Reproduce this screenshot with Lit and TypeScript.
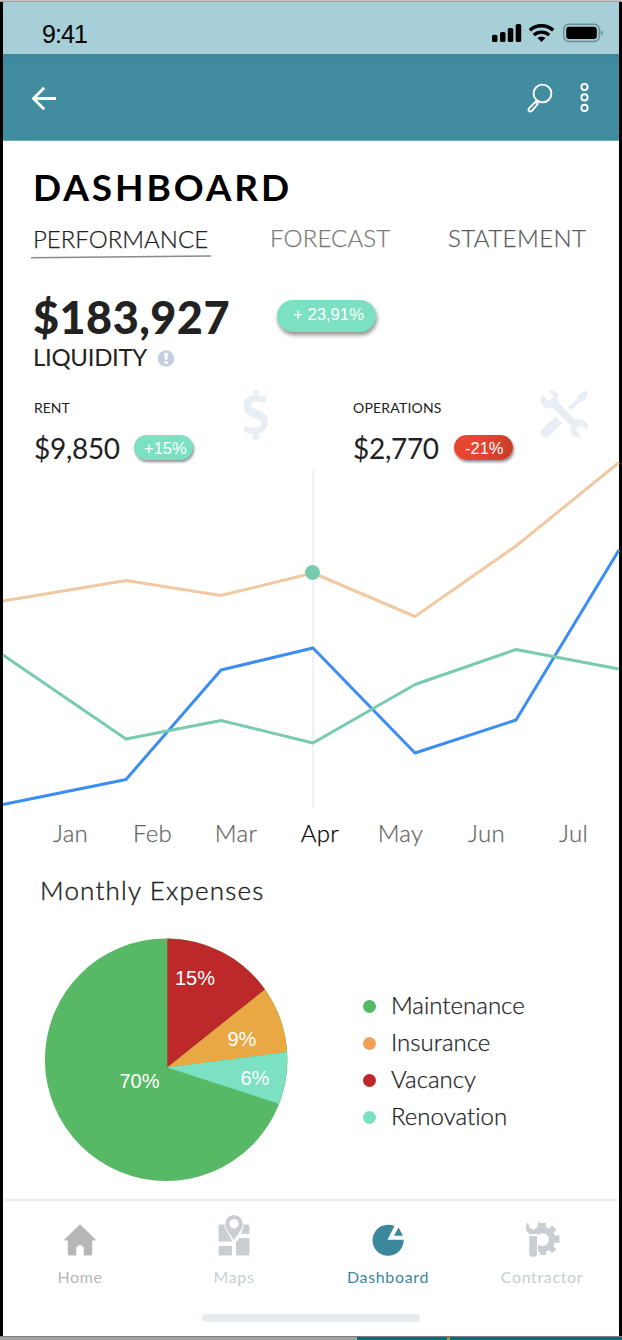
import { LitElement, html, css, svg } from "lit";
import { customElement } from "lit/decorators.js";
import { classMap } from "lit/directives/class-map.js";

const months = ["Jan", "Feb", "Mar", "Apr", "May", "Jun", "Jul"];

const series = [
  { cls: "orange", points: "0,139 123,118.5 218,133.5 310,111 412,154.5 513,84 616,0.5" },
  { cls: "blue", points: "0,342.5 123,317.5 218,208 310,186 412,291 513,258 616,88" },
  { cls: "green", points: "0,193 123,277 218,258.5 310,281 412,222.5 513,187.5 616,207" },
];

const legend = [
  { name: "Maintenance", cls: "maintenance" },
  { name: "Insurance", cls: "insurance" },
  { name: "Vacancy", cls: "vacancy" },
  { name: "Renovation", cls: "renovation" },
];

const homeIcon = svg`<path d="M24 11.200 8.600 26.300q-.9 1.200.6 1.200h2.600v13.600q0 1.400 1.400 1.400h7.100v-6.800q0-3.400 3.700-3.400t3.700 3.400v6.800h7.100q1.400 0 1.400-1.400V27.500h2.600q1.500 0 .6-1.200z"/>`;

const mapsIcon = svg`
  <path d="M10 11.500h4.500c.2 5.500 4.500 9.500 7 14.700V28.500h-13V13q0-1.500 1.500-1.500z"/>
  <path d="M33.500 11.500h4.500q1.500 0 1.500 1.500v7.800h-8.700c1.600-3 2.700-6 2.700-9.300z"/>
  <path d="M10 33h12v9.500H10q-1.500 0-1.500-1.500v-6.500q0-1.500 1.500-1.500z"/>
  <path d="M29.500 25h8.500q1.500 0 1.500 1.500V41q0 1.500-1.500 1.500H26V28.500c1.500-.5 2.500-2 3.500-3.500z"/>
  <path fill-rule="evenodd" d="M24 2a8.800 8.800 0 0 1 8.800 8.800C32.800 17 27 21.500 24 27.500 21 21.500 15.200 17 15.200 10.800A8.800 8.800 0 0 1 24 2zm0 4.100a4.700 4.700 0 1 0 0 9.400 4.700 4.700 0 0 0 0-9.400z"/>`;

const dashboardIcon = svg`
  <path d="M23.500 26.800h16.200A15.600 15.600 0 1 1 30.500 13z"/>
  <path d="M34.600 14.600 39 22.700h-9z"/>`;

const contractorIcon = svg`
  <path d="M20.200 22.300V20L22 12V10h6v4.200l3.200 1.400 3-3 4.200 4.200-3 3 1.500 2.800h4.500v7.200h-4.500l-1.500 3.200 3 3-4.200 4.200-3-3-3.200 1.400V42h-6v-3.200h-1.800V30.900A6.300 6.300 0 1 0 20.200 22.300z"/>
  <path d="M10.200 9c-3.400 3.500-3.200 9 1.300 12h8.200c4-2.500 4.400-8.500 1-13l-1.700 6.500-3.800 2.200-3.900-2.200z"/>
  <path d="M11.200 23h7.800v16.900a3.900 3.900 0 0 1-7.800 0z"/>`;

const navItems = [
  { label: "Home", cls: "home", icon: homeIcon },
  { label: "Maps", cls: "maps", icon: mapsIcon },
  { label: "Dashboard", cls: "current", icon: dashboardIcon },
  { label: "Contractor", cls: "contractor", icon: contractorIcon },
];

@customElement("app-root")
export class AppRoot extends LitElement {
  static styles = css`
    :host {
      display: block;
      width: 622px;
      height: 1340px;
      overflow: hidden;
      background: #fff;
      font-family: Lato, "Open Sans", sans-serif;
      font-variant-ligatures: none;
      color: #222;
    }
    * { box-sizing: border-box; }
    svg { display: block; flex: none; overflow: visible; }
    .edge-top { height: 2px; background: linear-gradient(#c4c2c3 50%, #a3a0a1 50%); }
    .phone {
      height: 1334px;
      border: solid #000;
      border-width: 0 3px;
      display: flex;
      flex-direction: column;
    }
    .edge-bottom { height: 4px; display: flex; border-top: 1px solid #7d7d7d; background: #a3a3a3; }
    .edge-bottom .desk { width: 357px; }
    .edge-bottom .window { flex: 1; background: linear-gradient(90deg, #0f6876 90px, #a98a35 90px, #a98a35 93px, #0f6876 93px); }

    .status {
      height: 52px;
      background: #a6cfd7;
      display: flex;
      justify-content: space-between;
      padding: 0 16px 0 39px;
    }
    .time { font: 25px/30px "Liberation Sans", sans-serif; letter-spacing: -0.900px; color: #000; padding-top: 17px; }
    .status svg { margin-top: 20px; }
    .appbar {
      height: 87px;
      border-bottom: 1px solid #6aa9b7;
      background: linear-gradient(#3e899d 10px, #428ca0 10px);
      display: flex;
      justify-content: space-between;
      padding: 0 30px 0 27px;
    }
    .appbar .back { margin-top: 31px; }
    .appbar .actions { margin-top: 28px; }

    h1 {
      margin: 22px 0 0 30px;
      font-size: 37px;
      line-height: 48px;
      font-weight: 700;
      letter-spacing: 2.900px;
      color: #000;
    }
    .tabs { display: flex; margin-top: 11px; height: 38px; padding-left: 28px; font-size: 24px; line-height: 30px; font-weight: 300; letter-spacing: 0.150px; }
    .tab { color: #5a5a5a; padding-top: 1px; -webkit-text-stroke: 0.250px currentColor; }
    .tab.active { width: 180px; padding: 2px 0 0 2px; color: #222; letter-spacing: 0; }
    .tab.active svg { margin: 1px 0 0 -2px; }
    .tab.forecast { width: 178px; margin-left: 59px; color: #7a7a7a; }
    .tab.statement { letter-spacing: 0.400px; }

    .amount-row { display: flex; align-items: flex-start; margin-top: 31px; height: 50px; padding-left: 30px; }
    .amount { width: 244px; font-size: 45px; line-height: 52px; font-weight: 900; letter-spacing: 0.450px; }
    .badge {
      display: block;
      font-family: "Liberation Sans", sans-serif;
      color: #fff;
      background: #7ce0c3;
      box-shadow: 1px 3px 4px rgba(0, 0, 0, 0.45);
      white-space: pre;
    }
    .badge.large { width: 99px; height: 32px; margin-top: 9px; border-radius: 16px; font-size: 16.700px; line-height: 29px; padding-left: 16px; }
    .badge.small { width: 59px; height: 25px; margin-top: 3px; border-radius: 12.500px; font-size: 16.500px; line-height: 26px; padding-left: 10px; box-shadow: 1px 2px 3px rgba(0, 0, 0, 0.45); }
    .badge.down { background: linear-gradient(100deg, #e8472f 35%, #c63f2b); padding-left: 11px; }
    .liquidity { display: flex; height: 30px; padding-left: 30px; font-size: 24px; line-height: 32px; }
    .liquidity-name { width: 124px; letter-spacing: -0.300px; }
    .liquidity svg { margin-top: 8px; }

    .stats { display: flex; height: 91px; padding: 19px 0 0 31px; }
    .stat { display: flex; flex: none; width: 319px; }
    .stat-text { flex: none; width: 207px; padding-top: 9px; }
    .stat.operations .stat-text { width: 187px; }
    .stat-name { font-size: 14px; line-height: 18px; }
    .operations .stat-name { letter-spacing: 0.200px; }
    .stat-value { display: flex; margin-top: 15px; font-size: 28px; line-height: 32px; height: 30px; letter-spacing: -0.300px; }
    .stat-value .badge { letter-spacing: 0; }
    .stat-number { width: 100px; }
    .operations .stat-number { width: 101px; }
    .stat-icon { fill: #e9eef5; }

    .chart polyline { fill: none; stroke-width: 3; stroke-linejoin: round; }
    .chart .orange { stroke: #f1c9a2; }
    .chart .blue { stroke: #3c8df3; }
    .chart .green { stroke: #79cbb0; }
    .chart .cursor { stroke: #ececec; stroke-width: 1.500; }
    .chart .marker { fill: #79cbb0; }

    .months {
      display: grid;
      grid-template-columns: 82px 82px 85px 83px 78px 94px 80px;
      margin: 7px 0 0 26.500px;
      font-size: 24px;
      line-height: 31px;
      height: 30px;
      font-weight: 300;
      letter-spacing: 0.300px;
      text-align: center;
      color: #666;
      -webkit-text-stroke: 0.250px currentColor;
    }
    .month.selected { color: #000; }

    h2 { margin: 26px 0 0 37px; font-size: 26px; line-height: 34px; font-weight: 300; letter-spacing: 1.200px; -webkit-text-stroke: 0.400px currentColor; }
    .expenses { display: flex; margin-top: 31px; height: 261px; padding-left: 42px; }
    .pie text { fill: #fff; font-family: "Liberation Sans", sans-serif; font-size: 20px; }
    .pie .maintenance { fill: #57b966; }
    .pie .vacancy { fill: #bd292a; }
    .pie .insurance { fill: #eaa845; }
    .pie .renovation { fill: #7ce0c3; }
    .legend { margin: 48px 0 0 75px; padding: 0; list-style: none; }
    .legend li { display: flex; align-items: center; height: 37px; font-size: 24px; line-height: 37px; font-weight: 300; -webkit-text-stroke: 0.250px currentColor; }
    .swatch { width: 13px; height: 13px; margin: 4px 15px 0 0; border-radius: 50%; }
    .swatch.maintenance { background: #57b966; }
    .swatch.insurance { background: #f29f58; }
    .swatch.vacancy { background: #bd292a; }
    .swatch.renovation { background: #7ce0c3; }

    .divider { height: 2px; margin: 0 2px; background: #e9ebec; }
    nav { display: grid; grid-template-columns: repeat(4, 1fr); height: 113px; }
    .nav-item { display: flex; flex-direction: column; align-items: center; padding-top: 12px; font-size: 16px; line-height: 20px; letter-spacing: 0.650px; font-weight: 400; }
    .nav-item svg { fill: currentColor; margin-bottom: 6px; }
    .home { color: #b7b7b7; }
    .maps, .contractor { color: #c9ced3; }
    .current { color: #3b879b; }
    .indicator { width: 218px; height: 8px; margin-left: 199px; border-radius: 4px; background: #e8ebee; }
  `;

  private renderStatus() {
    return html`<div class="status">
      <span class="time">9:41</span>
      <svg width="112" height="24" viewBox="0 0 112 24">
        <g>
          <rect x="1" y="12.800" width="5.500" height="7.200" rx="1.600"></rect>
          <rect x="9" y="10" width="5.500" height="10" rx="1.600"></rect>
          <rect x="16.800" y="6" width="5.500" height="14" rx="1.600"></rect>
          <rect x="24.700" y="2" width="5.500" height="18" rx="1.600"></rect>
        </g>
        <g transform="translate(-0.500 0)">
          <g fill="none" stroke="#000" stroke-width="3.400">
            <path d="M39.300 8.300a17.300 17.300 0 0 1 23.400 0"></path>
            <path d="M43.300 13.100a11.400 11.400 0 0 1 15.400 0"></path>
          </g>
          <path d="M51 19.900l-4-3.900a5.800 5.800 0 0 1 8 0z"></path>
        </g>
        <rect x="72.800" y="2.300" width="35.400" height="17.200" rx="5" fill="none" stroke="#6e8d94" stroke-width="1.500"></rect>
        <rect x="75.200" y="4.800" width="30.600" height="12.300" rx="3"></rect>
        <path d="M109.800 8.200q2 .6 2 2.800t-2 2.800z" fill="#6e8d94"></path>
      </svg>
    </div>`;
  }

  private renderAppBar() {
    return html`<div class="appbar">
      <svg class="back" width="28" height="26" viewBox="0 0 28 26" fill="none" stroke="#fff" stroke-width="2.800">
        <path d="M26 13.500H3.500M14.200 2.800 3.500 13.500l10.700 10.700"></path>
      </svg>
      <svg class="actions" width="64" height="32" viewBox="0 0 64 32" fill="none" stroke="#fff" stroke-width="1.900">
        <circle cx="17.500" cy="11.500" r="8.900"></circle>
        <path d="M10.200 20.500q2.200-.5 2.500 1.500L7 28.900q-1.500 1.300-2.800.2t-.2-2.700l5.900-6.100M12 18l-2.100 2.500"></path>
        <circle cx="59.500" cy="5" r="3.100"></circle>
        <circle cx="59.500" cy="15.400" r="3.100"></circle>
        <circle cx="59.500" cy="25.900" r="3.100"></circle>
      </svg>
    </div>`;
  }

  private renderStats() {
    return html`<div class="stats">
      <div class="stat">
        <div class="stat-text">
          <div class="stat-name">RENT</div>
          <div class="stat-value"><span class="stat-number">$9,850</span><span class="badge small">+15%</span></div>
        </div>
        <svg class="stat-icon" width="30" height="50" viewBox="0 0 30 50">
          <path d="M12 0h6v5.500c3 .3 5.500 1 7.800 2.100l-1.500 5.800c-3.300-1.400-6-2-8.500-2-3.800 0-5.800 1.200-5.800 3.400 0 2.600 2.700 3.700 7 5.400 6.500 2.400 10 6 10 11.600 0 6-3.700 10-9 11.300V49.500h-6v-5.600c-3.700-.2-7-1.100-9.500-2.500l1.500-6c3 1.500 6.500 2.400 9.700 2.400 3.800 0 6-1.400 6-4.200 0-2.700-2-4-6.700-5.700C6 25.300 2.300 22 2.300 16c0-5.400 3.600-9.400 9.700-10.400z"></path>
        </svg>
      </div>
      <div class="stat operations">
        <div class="stat-text">
          <div class="stat-name">OPERATIONS</div>
          <div class="stat-value"><span class="stat-number">$2,770</span><span class="badge small down">-21%</span></div>
        </div>
        <svg class="stat-icon" width="48" height="48" viewBox="0 0 48 48">
          <path d="M2.500 5.500 9 10.500l5-4L8.500.8C15-1.500 20 4.500 17.500 11.500l18 18C43 27 49.500 33 47 40l-6-5-5.500 4.500L41 46.500c-7 2.500-12.500-3.500-10-10.500l-18-18C5.500 20.500-1 14 .8 5.800z"></path>
          <path d="M28 17.500 37 9l.8-4 7-4.500L48 3.300 45 10.500l-4.500 1.300L31 20.500z"></path>
          <path d="M15.500 26.500l6.500 6.500L8.500 46.300a4.700 4.700 0 0 1-6.700-6.700z"></path>
        </svg>
      </div>
    </div>`;
  }

  private renderChart() {
    return html`<svg class="chart" width="616" height="348" viewBox="0 0 616 348">
      <line class="cursor" x1="310.200" x2="310.200" y1="8" y2="346"></line>
      ${series.map((s) => svg`<polyline class=${s.cls} points=${s.points}></polyline>`)}
      <circle class="marker" cx="309.500" cy="110.500" r="7.500"></circle>
    </svg>`;
  }

  private renderPie() {
    return html`<svg class="pie" width="243" height="244" viewBox="0 0 243 244">
      <circle class="maintenance" cx="121.200" cy="121.700" r="121.300"></circle>
      <path class="vacancy" d="M122.300 129.400V.4A121.300 121.300 0 0 1 220 51.500z"></path>
      <path class="insurance" d="M122.300 129.400 220 51.500A121.300 121.300 0 0 1 241.900 114z"></path>
      <path class="renovation" d="M122.300 129.400 241.900 114A121.300 121.300 0 0 1 233.800 165.700z"></path>
      <text x="130" y="47">15%</text>
      <text x="182.500" y="108">9%</text>
      <text x="195.500" y="147">6%</text>
      <text x="74.500" y="150">70%</text>
    </svg>`;
  }

  render() {
    return html`
      <div class="edge-top"></div>
      <div class="phone">
        ${this.renderStatus()} ${this.renderAppBar()}
        <h1>DASHBOARD</h1>
        <div class="tabs">
          <div class="tab active">
            <span>PERFORMANCE</span>
            <svg width="180" height="4" viewBox="0 0 180 4"><path d="M0 2.800 180 1" stroke="#8a8a8a" stroke-width="1.500"></path></svg>
          </div>
          <div class="tab forecast">FORECAST</div>
          <div class="tab statement">STATEMENT</div>
        </div>
        <div class="amount-row">
          <span class="amount">$183,927</span><span class="badge large">+ 23,91%</span>
        </div>
        <div class="liquidity">
          <span class="liquidity-name">LIQUIDITY</span>
          <svg width="18" height="18" viewBox="0 0 18 18">
            <circle cx="9" cy="9.500" r="8.300" fill="#c5cfdf"></circle>
            <path d="M7.300 4h3.600l-.4 6.700H7.700zM7.500 12h3.200v2.700H7.500z" fill="#fff"></path>
          </svg>
        </div>
        ${this.renderStats()} ${this.renderChart()}
        <div class="months">
          ${months.map((m) => html`<span class=${classMap({ month: true, selected: m === "Apr" })}>${m}</span>`)}
        </div>
        <h2>Monthly Expenses</h2>
        <div class="expenses">
          ${this.renderPie()}
          <ul class="legend">
            ${legend.map((l) => html`<li><span class="swatch ${l.cls}"></span>${l.name}</li>`)}
          </ul>
        </div>
        <div class="divider"></div>
        <nav>
          ${navItems.map(
            (n) => html`<div class="nav-item ${n.cls}">
              <svg width="48" height="48" viewBox="0 0 48 48">${n.icon}</svg>
              <span>${n.label}</span>
            </div>`
          )}
        </nav>
        <div class="indicator"></div>
      </div>
      <div class="edge-bottom"><div class="desk"></div><div class="window"></div></div>
    `;
  }
}
